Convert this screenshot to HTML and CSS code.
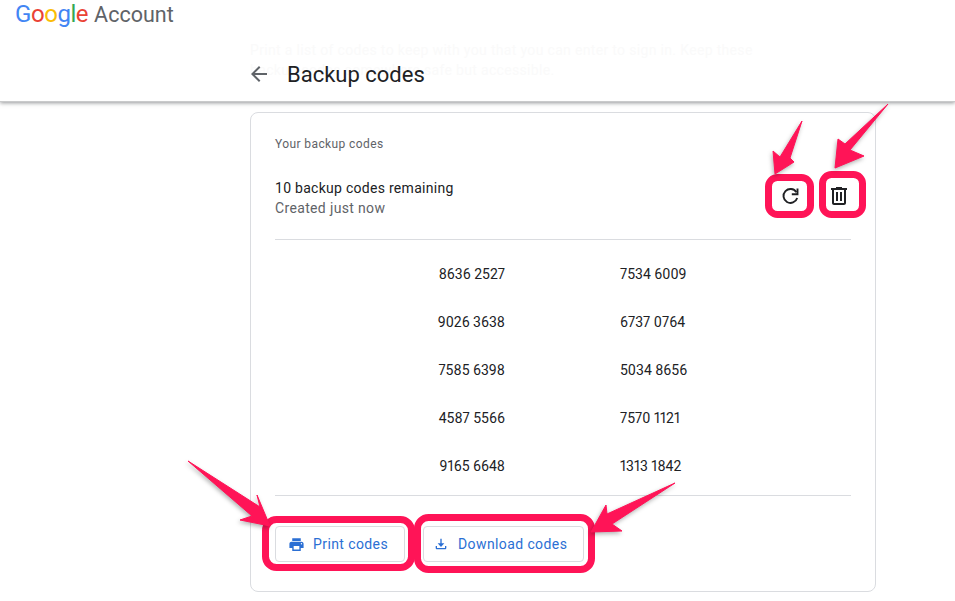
FILE: index.html
```html
<!DOCTYPE html>
<html lang="en">
<head>
<meta charset="utf-8">
<title>Backup codes</title>
<link rel="stylesheet" href="styles.css">
</head>
<body>
<header class="top">
  <div class="brand">
    <span class="logo"><span class="b">G</span><span class="r">o</span><span class="y">o</span><span class="b">g</span><span class="g">l</span><span class="r">e</span></span>
    <span class="acct">Account</span>
  </div>
  <p class="ghost">Print a list of codes to keep with you that you can enter to sign in. Keep these<br>backup codes somewhere safe but accessible.</p>
  <div class="titlebar">
    <svg class="back" viewBox="0 0 24 24" width="24" height="24"><path d="M20 11H7.83l5.59-5.59L12 4l-8 8 8 8 1.41-1.41L7.83 13H20z"/></svg>
    <h1>Backup codes</h1>
  </div>
</header>
<main class="page">
  <section class="card">
    <h2>Your backup codes</h2>
    <div class="status">
      <div class="status-text">
        <div class="remain">10 backup codes remaining</div>
        <div class="created">Created just now</div>
      </div>
      <div class="tools">
        <svg class="refresh" viewBox="0 0 24 24" width="24" height="24"><path d="M18.4 8.2A7 7 0 1 0 19.2 14"/><path d="M19.5 4.5v5.7h-5.7"/></svg>
        <svg viewBox="0 0 24 24" width="24" height="24"><path d="M15 4V3H9v1H4v2h1v13c0 1.1.9 2 2 2h10c1.1 0 2-.9 2-2V6h1V4h-5zm2 15H7V6h10v13zM9 8h2v9H9zm4 0h2v9h-2z"/></svg>
      </div>
    </div>
    <div class="codes">
      <span class="l">8636 2527</span><span>7534 6009</span>
      <span class="l">9026 3638</span><span>6737 0764</span>
      <span class="l">7585 6398</span><span>5034 8656</span>
      <span class="l">4587 5566</span><span>7570 1121</span>
      <span class="l">9165 6648</span><span>1313 1842</span>
    </div>
    <div class="actions">
      <button class="btn print"><svg viewBox="0 0 24 24" width="17" height="17"><path d="M19 8H5c-1.66 0-3 1.34-3 3v6h4v4h12v-4h4v-6c0-1.66-1.34-3-3-3zm-3 11H8v-5h8v5zm3-7c-.55 0-1-.45-1-1s.45-1 1-1 1 .45 1 1-.45 1-1 1zm-1-9H6v4h12V3z"/></svg>Print codes</button>
      <button class="btn download"><svg viewBox="0 0 24 24" width="16" height="16"><path d="M4 15h2v3h12v-3h2v3c0 1.1-.9 2-2 2H6c-1.1 0-2-.9-2-2zM11 4h2v7h4l-5 5.5L7 11h4z"/></svg>Download codes</button>
    </div>
  </section>
</main>
<svg class="marks" viewBox="0 0 955 601" width="955" height="601">
  <g class="boxes">
    <rect x="768.5" y="177.5" width="42" height="37" rx="9"/>
    <rect x="822.5" y="174.5" width="40" height="40" rx="9"/>
    <rect x="265.5" y="519.5" width="146" height="48" rx="11"/>
    <rect x="417.5" y="517.5" width="174" height="52" rx="11"/>
  </g>
  <g class="arrows">
    <polygon points="802,121 790,158 794,162 775,174 773,151 780,157"/>
    <polygon points="888,104 850,150 864,156 835,168 838,139 845,144"/>
    <polygon points="188,461 260,507 257,495 270,526 240,520 252,516"/>
    <polygon points="675,483 612,524 622,531 591,532 606,505 607,514"/>
  </g>
</svg>
</body>
</html>
```
FILE: styles.css
```css
* { box-sizing: border-box; }
html, body { margin: 0; height: 601px; overflow: hidden; background: #fff; }
body { font-family: Roboto, "Open Sans", sans-serif; color: #202124; position: relative; }

.top {
  height: 102px;
  background: #fff;
  position: relative;
  box-shadow: 0 1px 4px rgba(60, 64, 67, .55);
  border-bottom: 1px solid #c9cacb;
}
.brand { display: flex; align-items: baseline; padding: 1px 0 0 15px; height: 48px; }
.logo { font-size: 24px; line-height: 26px; letter-spacing: -.45px; }
.acct { font-size: 21.5px; line-height: 26px; color: #5f6368; margin-left: 6px; }
.b { color: #4285f4; } .r { color: #ea4335; } .y { color: #fbbc05; } .g { color: #34a853; }

.ghost {
  position: absolute; left: 250px; top: 40px; margin: 0;
  font-size: 14px; line-height: 20px; letter-spacing: .33px; color: #fafafa; white-space: nowrap;
}
.titlebar { display: flex; align-items: center; height: 52px; padding-left: 247px; position: relative; }
.back { fill: #5f6368; }
.titlebar h1 { margin: 0 0 0 16px; font-size: 22px; font-weight: 400; color: #202124; }

.page { padding: 10px 0 0 250px; }
.card {
  width: 626px; height: 480px;
  border: 1px solid #dadce0; border-radius: 8px;
  padding: 0 24px;
}
.card h2 { margin: 23px 0 0; font-size: 12px; line-height: 17px; font-weight: 400; color: #5f6368; letter-spacing: .4px; }
.status { display: flex; justify-content: space-between; align-items: flex-start; height: 87px; padding-top: 25px; border-bottom: 1px solid #dadce0; }
.remain { font-size: 14px; line-height: 20px; letter-spacing: .28px; }
.created { font-size: 14px; line-height: 20px; letter-spacing: .35px; color: #5f6368; }
.tools { display: flex; gap: 25px; margin-top: 6px; }
.tools svg { fill: #202124; }
.tools .refresh { fill: none; stroke: #202124; stroke-width: 1.9; }

.codes {
  display: grid; grid-template-columns: 230px 1fr; column-gap: 115px; grid-auto-rows: 48px;
  align-items: center; font-size: 14px; height: 256px; padding-top: 10px;
  border-bottom: 1px solid #dadce0;
  font-variant-numeric: proportional-nums;
}
.codes .l { text-align: right; }

.actions { display: flex; gap: 18px; margin-top: 30px; }
.btn {
  height: 36px; display: flex; align-items: center;
  border: 1px solid #dadce0; border-radius: 4px; background: #fff; color: #2b6fd4;
  font-family: inherit; font-size: 14px; letter-spacing: .4px;
}
.btn svg { fill: #2b6fd4; }
.print { width: 130px; padding: 0 0 0 12px; gap: 8px; }
.download { width: 161px; padding: 0 0 0 9px; gap: 9px; }

.marks { position: absolute; left: 0; top: 0; pointer-events: none; }
.boxes rect { fill: none; stroke: #ff1457; stroke-width: 7; }
.arrows polygon { fill: #ff1457; stroke: #ff1457; stroke-width: 1; stroke-linejoin: round; filter: drop-shadow(-1px 2px 2px rgba(0,0,0,.3)); }
```
